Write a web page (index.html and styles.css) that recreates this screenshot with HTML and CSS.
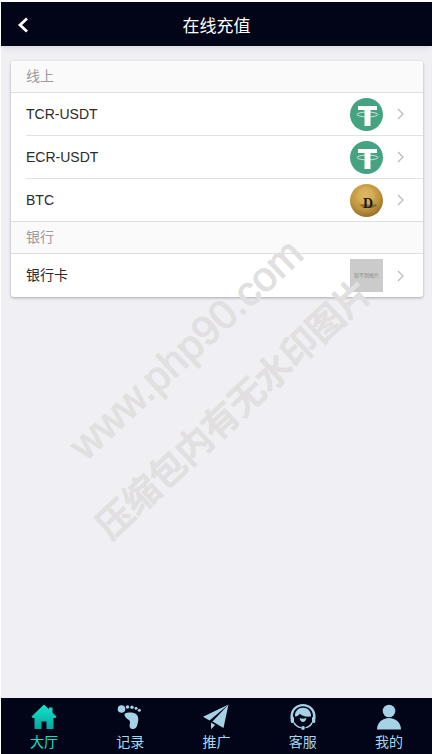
FILE: index.html
```html
<!DOCTYPE html>
<html lang="zh">
<head>
<meta charset="utf-8">
<title>在线充值</title>
<link rel="stylesheet" href="styles.css">
</head>
<body>
<div class="app">
  <header class="topbar">
    <svg class="back" viewBox="0 0 12 16" width="12" height="16"><path d="M10 1.500 3 8l7 6.500" fill="none" stroke="#fff" stroke-width="2.800"/></svg>
    <h1 class="title">在线充值</h1>
  </header>
  <main class="content">
    <section class="card">
      <div class="group">线上</div>
      <div class="row ruled">
        <span class="label">TCR-USDT</span>
        <svg class="logo" viewBox="0 0 33 33"><use href="#tether"/></svg>
        <svg class="chev" viewBox="0 0 7 12" width="7" height="12"><path d="M1 1l5 5-5 5" fill="none" stroke="#b8b8c0" stroke-width="1.200"/></svg>
      </div>
      <div class="row ruled">
        <span class="label">ECR-USDT</span>
        <svg class="logo" viewBox="0 0 33 33"><use href="#tether"/></svg>
        <svg class="chev" viewBox="0 0 7 12" width="7" height="12"><path d="M1 1l5 5-5 5" fill="none" stroke="#b8b8c0" stroke-width="1.200"/></svg>
      </div>
      <div class="row">
        <span class="label">BTC</span>
        <svg class="logo" viewBox="0 0 33 33">
          <defs>
            <radialGradient id="gold" cx="45%" cy="35%" r="65%"><stop offset="0" stop-color="#dcb65c"/><stop offset="0.650" stop-color="#c2963f"/><stop offset="1" stop-color="#94702f"/></radialGradient>
            <filter id="soft" x="-20%" y="-20%" width="140%" height="140%"><feGaussianBlur stdDeviation=".6"/></filter>
          </defs>
          <circle cx="16.500" cy="16.500" r="16.500" fill="url(#gold)"/>
          <circle cx="16" cy="12" r="9" fill="#e0c06a" opacity=".35" filter="url(#soft)"/>
          <path d="M9 21l4-1 8 1 5-1 1 2-5 2-8 0z" fill="#3a2a14" opacity=".4" filter="url(#soft)"/>
          <text x="18" y="24" class="coin">D</text>
        </svg>
        <svg class="chev" viewBox="0 0 7 12" width="7" height="12"><path d="M1 1l5 5-5 5" fill="none" stroke="#b8b8c0" stroke-width="1.200"/></svg>
      </div>
      <div class="group">银行</div>
      <div class="row row-last">
        <span class="label">银行卡</span>
        <span class="thumb">暂不到图片</span>
        <svg class="chev" viewBox="0 0 7 12" width="7" height="12"><path d="M1 1l5 5-5 5" fill="none" stroke="#b8b8c0" stroke-width="1.200"/></svg>
      </div>
    </section>
  </main>
  <nav class="tabbar">
    <a class="tab active">
      <svg viewBox="0 0 26 26" width="26" height="26">
        <defs><linearGradient id="act" x1="0" y1="0" x2="0" y2="1"><stop offset="0" stop-color="#14e6cc"/><stop offset="1" stop-color="#06a6a0"/></linearGradient></defs>
        <path d="M13 0.500 0.500 12.500l1 1.500H3.500V25h7v-7.500h5V25h7V14h2l1-1.500-4-3.800V3.500h-3.500v1.800z" fill="url(#act)"/>
      </svg>
      <span>大厅</span>
    </a>
    <a class="tab">
      <svg viewBox="0 0 26 26" width="26" height="26" fill="#a5d2e6">
        <circle cx="4.500" cy="5" r="3.800"/><circle cx="10.500" cy="3" r="1.800"/><circle cx="15" cy="3.200" r="1.700"/><circle cx="19" cy="4.200" r="1.500"/><circle cx="22.300" cy="6.300" r="1.500"/>
        <path d="M8 9.500c3-1.500 9-1.500 11.500 1 3 3 1.500 8 .8 10.500-.8 3-2.800 4.500-5 4-3-.7-3-3.200-2.500-5 .5-2 .4-3.200-1.500-4.500C9 14 6.500 11.500 8 9.500z"/>
      </svg>
      <span>记录</span>
    </a>
    <a class="tab">
      <svg viewBox="0 0 26 26" width="26" height="26" fill="#a5d2e6">
        <path d="M25.500 0.500 0 12.800l6.500 3.700z"/><path d="M25.500 0.500 9.500 17.500 20.500 24z"/><path d="M8 18.500v6.800l4.200-4.400z"/>
      </svg>
      <span>推广</span>
    </a>
    <a class="tab">
      <svg viewBox="0 0 26 26" width="26" height="26" fill="#a5d2e6">
        <path d="M13 0C6 0 .5 5 .5 12v2.500H3V12C3 6.200 7.500 2.300 13 2.300S23 6.200 23 12v2.500h2.500V12C25.500 5 20 0 13 0z"/>
        <path d="M13 3.800c-4.700 0-8 3.400-8 7.700 0 1.200.2 2.200.6 3.200h14.800c.4-1 .6-2 .6-3.200 0-4.300-3.300-7.700-8-7.700z"/>
        <path d="M5 12.500c1.500.5 3.500-.8 5-2.700 1.500 2 5.500 3.300 11 2.700v3l-2.300 4c-1.600 1.500-3.600 2.200-5.700 2.200s-4.100-.7-5.700-2.200L5 15.500z" fill="#020417"/>
        <path d="M9.500 14c.5 2.600 2 4 3.500 4s3-1.400 3.500-4c-2.300 1-4.700 1-7 0z"/>
        <rect x="0.700" y="12.500" width="3.300" height="6.500" rx="1.500"/>
        <rect x="22" y="12.500" width="3.300" height="6.500" rx="1.500"/>
        <path d="M3 18.500c1.500 3.500 4.800 5.500 8 5.700v-1.300c-2.600-.3-4.800-1.800-6.200-4.400zM23 18.500c-1.200 3.500-4 5.500-7.500 5.700v-1.300c2.600-.3 4.600-1.800 5.700-4.400z"/>
        <circle cx="13" cy="24" r="1.900"/>
      </svg>
      <span>客服</span>
    </a>
    <a class="tab">
      <svg viewBox="0 0 26 26" width="26" height="26" fill="#a5d2e6">
        <circle cx="13" cy="7" r="6.300"/><path d="M1 25.500c0-6.500 5-11.500 12-11.500s12 5 12 11.500z"/>
      </svg>
      <span>我的</span>
    </a>
  </nav>
  <div class="mark" aria-hidden="true">
    <div class="mark-a">www.php90.com</div>
    <div class="mark-b">压缩包内有无水印图片</div>
  </div>
</div>
<svg class="defs" width="0" height="0">
  <symbol id="tether" viewBox="0 0 33 33">
    <circle cx="16.500" cy="16.500" r="16.500" fill="#46a382"/>
    <path d="M8 8h19v4h-6.500v16h-6V12H8z" fill="#fff"/>
    <ellipse cx="17.500" cy="16.500" rx="10.500" ry="2.400" fill="none" stroke="#fff" stroke-width=".7"/>
  </symbol>
</svg>
</body>
</html>
```
FILE: styles.css
```css
* { box-sizing: border-box; }
html, body { margin: 0; height: 100%; }
body { font-family: "Liberation Sans", "Noto Sans CJK SC", sans-serif; background: #fff; }
.defs { position: absolute; }
.app {
  position: relative;
  width: 431px;
  height: 752px;
  margin: 2px 0 0 1px;
  background: #efeff4;
  display: flex;
  flex-direction: column;
  overflow: hidden;
}
.topbar {
  height: 44px;
  flex: none;
  background: #020417;
  position: relative;
  display: flex;
  align-items: center;
  justify-content: center;
  box-shadow: 0 1px 6px rgba(0, 0, 0, .12);
}
.back { position: absolute; left: 16px; top: 15px; }
.title { margin: 0; font-size: 17px; font-weight: 400; color: #fff; }
.content { flex: 1; padding: 15px 9px 0 10px; }
.card {
  background: #fff;
  border-radius: 3px;
  box-shadow: 0 1px 3px rgba(0, 0, 0, .3);
  overflow: hidden;
}
.group {
  height: 32px;
  background: #fafafa;
  border-bottom: 1px solid #dfdfdf;
  padding-left: 15px;
  font-size: 14px;
  line-height: 30px;
  color: #9a9a9f;
}
.row {
  height: 43px;
  margin-left: 15px;
  padding-right: 19px;
  display: flex;
  align-items: center;
  font-size: 14px;
  color: #2b2b2b;
}
.ruled { border-bottom: 1px solid #e2e2e2; }
.row:nth-child(4) { border-bottom: 1px solid #dfdfdf; margin-left: 0; padding-left: 15px; }
.label { flex: 1; }
.row-last .label { padding-bottom: 4px; }
.logo { width: 33px; height: 33px; margin: 1px 14px 0 0; }
.coin { font: 700 14px "Liberation Serif", serif; fill: #1f1710; text-anchor: middle; }
.thumb {
  width: 33px;
  height: 33px;
  margin-right: 14px;
  background: #cbcbcb;
  color: #8f8f8f;
  font-size: 5px;
  line-height: 33px;
  text-align: center;
  white-space: nowrap;
  overflow: hidden;
}
.tabbar {
  height: 56px;
  flex: none;
  background: #020417;
  display: grid;
  grid-template-columns: repeat(5, 1fr);
}
.tab {
  display: flex;
  flex-direction: column;
  align-items: center;
  padding-top: 6px;
  font-size: 14px;
  line-height: 18px;
  color: #a5d8f2;
}
.tab svg { display: block; margin-bottom: 3px; }
.tab.active { color: #12e0cc; }
.mark {
  position: absolute;
  left: 184.500px;
  top: 347px;
  width: 0;
  height: 0;
  transform: rotate(-43deg);
  pointer-events: none;
  color: #e1dfe0;
  white-space: nowrap;
  -webkit-text-stroke: 1px #e1dfe0;
}
.mark-a, .mark-b { position: absolute; transform: translateX(-50%); }
.mark-a { top: -23px; left: 0; font: 41px/46px "Liberation Sans", sans-serif; }
.mark-b { top: 50px; left: -6px; font: 500 36px/46px "Noto Sans CJK SC", sans-serif; }
```
